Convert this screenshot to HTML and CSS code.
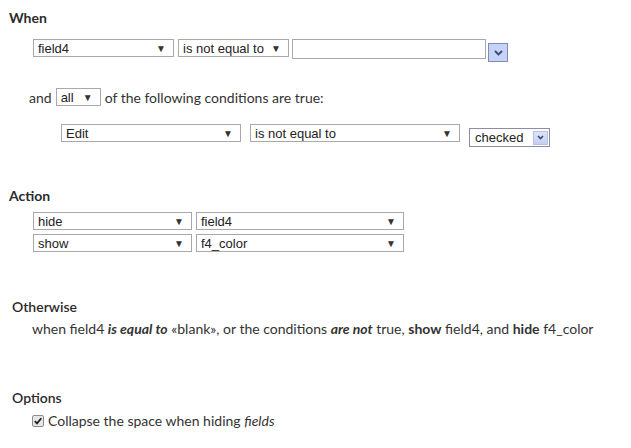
FILE: index.html
```html
<!DOCTYPE html>
<html lang="en">
<head>
    <meta charset="UTF-8">
    <title>Conditional Logic</title>
    <link rel="stylesheet" href="styles.css">
</head>
<body>
    <div class="logic">
        <!-- When -->
        <h3 class="title">When</h3>
        <div class="cond-row">
            <div class="select w-field"><span>field4</span><i class="arrow">&#9660;</i></div>
            <div class="select w-op"><span>is not equal to</span><i class="arrow">&#9660;</i></div>
            <div class="text-input"></div>
            <div class="dd-btn">
                <svg width="9" height="6" viewBox="0 0 9 6"><path d="M1 1 L4.5 4.5 L8 1" fill="none" stroke="#3b4a6e" stroke-width="1.8"/></svg>
            </div>
        </div>

        <div class="and-row">
            <span>and</span>
            <div class="select w-all"><span>all</span><i class="arrow">&#9660;</i></div>
            <span>of the following conditions are true:</span>
        </div>

        <div class="sub-row">
            <div class="select w-edit"><span>Edit</span><i class="arrow">&#9660;</i></div>
            <div class="select w-op2"><span>is not equal to</span><i class="arrow">&#9660;</i></div>
            <div class="combo">
                <span>checked</span>
                <div class="combo-btn">
                    <svg width="7" height="5" viewBox="0 0 7 5"><path d="M1 1 L3.5 3.5 L6 1" fill="none" stroke="#3b4a6e" stroke-width="1.6"/></svg>
                </div>
            </div>
        </div>

        <!-- Action -->
        <h3 class="title action-title">Action</h3>
        <div class="action-rows">
            <div class="action-row">
                <div class="select w-act"><span>hide</span><i class="arrow">&#9660;</i></div>
                <div class="select w-target"><span>field4</span><i class="arrow">&#9660;</i></div>
            </div>
            <div class="action-row">
                <div class="select w-act"><span>show</span><i class="arrow">&#9660;</i></div>
                <div class="select w-target"><span>f4_color</span><i class="arrow">&#9660;</i></div>
            </div>
        </div>

        <!-- Otherwise -->
        <h3 class="title sub-title otherwise-title">Otherwise</h3>
        <p class="summary">when field4 <b><i>is equal to</i></b> «blank», or the conditions <b><i>are not</i></b> true, <b>show</b> field4, and <b>hide</b> f4_color</p>

        <!-- Options -->
        <h3 class="title sub-title options-title">Options</h3>
        <label class="option">
            <span class="check">
                <svg width="12" height="12" viewBox="0 0 12 12"><rect x="0.5" y="0.5" width="11" height="11" rx="1.5" fill="#e6e6e6" stroke="#8c8c8c"/><path d="M2.8 6.2 L5 8.4 L9.3 3.2" fill="none" stroke="#222" stroke-width="1.8"/></svg>
            </span>
            <span>Collapse the space when hiding <i>fields</i></span>
        </label>
    </div>
</body>
</html>
```

FILE: styles.css
```css
body {
    margin: 0;
    padding: 0;
    background-color: #fff;
    font-family: Lato, "Open Sans", sans-serif;
    font-size: 14px;
    color: #333;
}

.logic {
    padding-left: 9px;
}

.title {
    margin: 0;
    padding-top: 10px;
    font-size: 14px;
    line-height: 16px;
    font-weight: bold;
    color: #2b2b2b;
}

.sub-title {
    padding-left: 3px;
    font-weight: 600;
}

/* select-like boxes */
.select {
    display: flex;
    align-items: center;
    justify-content: space-between;
    box-sizing: border-box;
    height: 18px;
    padding: 0 7px 0 4px;
    border: 1px solid #a9a9a9;
    background-color: #fff;
    font-family: "Liberation Sans", Arial, sans-serif;
    font-size: 13px;
    color: #222;
}

.select .arrow {
    font-style: normal;
    font-size: 10px;
    color: #333;
}

.cond-row {
    display: flex;
    align-items: flex-start;
    margin: 13px 0 0 24px;
}

.w-field { width: 141px; margin-right: 4px; }
.w-op { width: 111px; margin-right: 3px; }

.text-input {
    box-sizing: border-box;
    width: 194px;
    height: 20px;
    border: 1px solid #a9a9a9;
}

.dd-btn {
    display: flex;
    align-items: center;
    justify-content: center;
    box-sizing: border-box;
    width: 20px;
    height: 19px;
    margin: 4px 0 0 2px;
    border: 1px solid #8288b8;
    background-color: #c6d3f8;
}

.and-row {
    display: flex;
    align-items: center;
    gap: 4px;
    margin: 26px 0 0 20px;
}

.w-all { width: 45px; }

.sub-row {
    display: flex;
    align-items: flex-start;
    margin: 18px 0 0 52px;
}

.w-edit { width: 180px; margin-right: 9px; }
.w-op2 { width: 210px; margin-right: 9px; }

.combo {
    display: flex;
    align-items: center;
    justify-content: space-between;
    box-sizing: border-box;
    width: 81px;
    height: 19px;
    margin-top: 4px;
    padding: 0 1px 0 5px;
    border: 1px solid #8f8aa8;
    font-family: "Liberation Sans", Arial, sans-serif;
    font-size: 13px;
    color: #222;
}

.combo-btn {
    display: flex;
    align-items: center;
    justify-content: center;
    box-sizing: border-box;
    width: 15px;
    height: 14px;
    border: 1px solid #b3c0e8;
    background: linear-gradient(#dde5fb, #c3cff5);
}

.action-title {
    margin-top: 31px;
}

.action-rows {
    display: flex;
    flex-direction: column;
    gap: 4px;
    margin: 8px 0 0 24px;
}

.action-row {
    display: flex;
    gap: 4px;
}

.w-act { width: 159px; }
.w-target { width: 208px; }

.otherwise-title {
    margin-top: 37px;
}

.summary {
    margin: 6px 0 0 23px;
    line-height: 16px;
}

.options-title {
    margin-top: 43px;
}

.option {
    display: flex;
    align-items: center;
    gap: 4px;
    margin: 7px 0 0 23px;
    line-height: 16px;
}

.check {
    display: flex;
}
```
